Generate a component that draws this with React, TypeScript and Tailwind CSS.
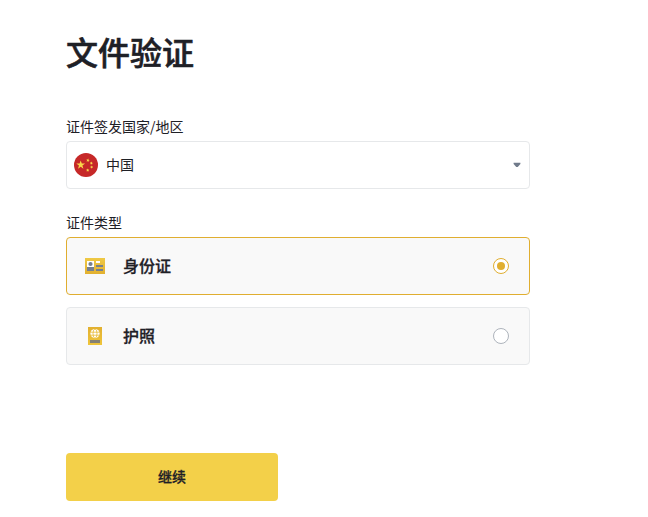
import React, { useState } from 'react'

type DocumentType = 'id' | 'passport'

const ChinaFlag: React.FC = () => (
  <svg width="24" height="24" viewBox="0 0 24 24" fill="none">
    <circle cx="12" cy="12" r="12" fill="#C62828" />
    <g fill="#F9D84A">
      <path d="M6.7 7.4l1.1 3.2h3.3l-2.7 2 1 3.2-2.7-2-2.7 2 1-3.2-2.7-2h3.3z" />
      <path d="M12.4 6.4l1.1.1.8-.9.2 1.2 1.1.4-1 .6-.1 1.2-.8-.8-1.2.2.6-1z" />
      <path d="M16 9.2l1.1.2.7-.9.2 1.2 1.1.3-1 .6v1.2l-.9-.8-1.1.3.5-1.1z" />
      <path d="M17.1 12.4l.7 1 1.2-.3-.7 1 .6 1-1.1-.3-.8.9v-1.2l-1.1-.5 1.1-.4z" />
      <path d="M13.5 15.4l.6 1h1.2l-.7.9.3 1.2-1.1-.5-1 .7.1-1.2-.9-.8 1.2-.2z" />
    </g>
  </svg>
)

const IdCardIcon: React.FC = () => (
  <svg width="24" height="24" viewBox="0 0 24 24" fill="none">
    <defs>
      <linearGradient id="idCard" x1="12" y1="4" x2="12" y2="20" gradientUnits="userSpaceOnUse">
        <stop stopColor="#EFC945" />
        <stop offset="1" stopColor="#E2B030" />
      </linearGradient>
    </defs>
    <path d="M2 4h20v16H2z" fill="url(#idCard)" />
    <path d="M4 7h7v6H4zM13 7h4v2h-4z" fill="#fff" />
    <circle cx="7.5" cy="10" r="2.1" fill="#76808F" />
    <path d="M4 13h7v4H4zM13 11h7v2h-7zM13 15h7v2h-7z" fill="#76808F" />
  </svg>
)

const PassportIcon: React.FC = () => (
  <svg width="24" height="24" viewBox="0 0 24 24" fill="none">
    <defs>
      <linearGradient id="passport" x1="12" y1="21" x2="12" y2="3" gradientUnits="userSpaceOnUse">
        <stop stopColor="#EFC53B" />
        <stop offset="1" stopColor="#E2B030" />
      </linearGradient>
    </defs>
    <path d="M5 3h14v18H5z" fill="url(#passport)" />
    <circle cx="12" cy="9.6" r="4.6" fill="#fff" />
    <path d="M7.4 8.2h9.2M7.4 11.2h9.2" stroke="#E8BA35" strokeWidth="0.8" />
    <ellipse cx="12" cy="9.6" rx="2" ry="4.6" stroke="#E8BA35" strokeWidth="0.8" />
    <path d="M7 16h10v3H7z" fill="#858173" />
  </svg>
)

const documentTypes = [
  { id: 'id' as DocumentType, label: '身份证', icon: IdCardIcon },
  { id: 'passport' as DocumentType, label: '护照', icon: PassportIcon }
]

export default function App() {
  const [selected, setSelected] = useState<DocumentType>('id')

  return (
    <div className="min-h-[517px] bg-white pl-[66px] pt-[31px] font-['Noto_Sans_CJK_SC',sans-serif] text-[#1e2026]">
      <h1 className="text-[32px] font-medium leading-10 [-webkit-text-stroke:0.6px_#1e2026]">文件验证</h1>

      <div className="mt-[45px] w-[464px]">
        {/* Issuing country */}
        <div className="flex h-5 items-center text-sm">
          证件签发国家/地区
        </div>
        <button
          type="button"
          className="mt-[5px] flex h-12 w-full items-center rounded border border-[#e6e8ea] bg-white pl-[7px] pr-2"
        >
          <ChinaFlag />
          <span className="ml-2 flex-1 pb-0.5 text-left text-sm">中国</span>
          <svg width="8" height="6" viewBox="0 0 8 6" fill="#707A8A">
            <path d="M.6 .7h6.8v1.2L4.7 5H3.3L.6 1.9z" />
          </svg>
        </button>

        {/* Document type */}
        <div className="mt-[23px] flex h-5 items-center text-sm">证件类型</div>
        <div className="mt-[5px] flex flex-col gap-3">
          {documentTypes.map(({ id, label, icon: Icon }) => (
            <button
              key={id}
              type="button"
              role="radio"
              aria-checked={selected === id}
              onClick={() => setSelected(id)}
              className={`flex h-[58px] items-center rounded border bg-[#f9f9f9] pl-4 pr-5 ${
                selected === id ? 'border-[#e0ae30]' : 'border-[#e6e8ea]'
              }`}
            >
              <Icon />
              <span className="ml-4 flex-1 pb-0.5 text-left text-base font-medium [-webkit-text-stroke:0.3px_#1e2026]">
                {label}
              </span>
              <span
                className={`flex size-4 items-center justify-center rounded-full border bg-white ${
                  selected === id ? 'border-[#e0ae30]' : 'border-[#aeb4bc]'
                }`}
              >
                {selected === id && <span className="size-2 rounded-full bg-[#e0ae30]" />}
              </span>
            </button>
          ))}
        </div>
      </div>

      <button
        type="button"
        className="mt-[88px] h-12 w-[212px] rounded bg-[#f3d049] pb-0.5 text-sm font-medium [-webkit-text-stroke:0.3px_#1e2026]"
      >
        继续
      </button>
    </div>
  )
}
